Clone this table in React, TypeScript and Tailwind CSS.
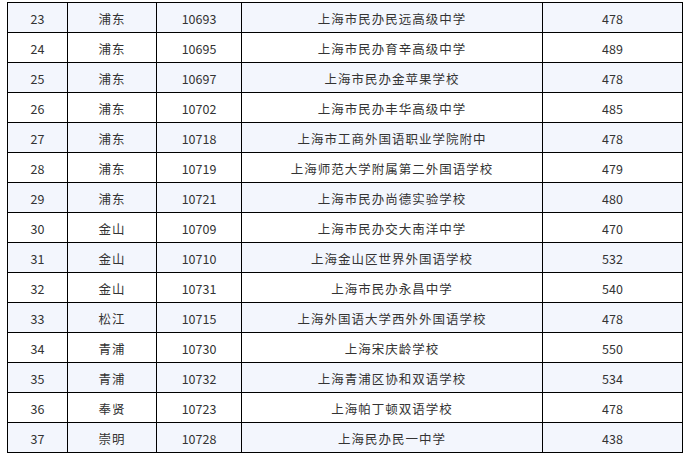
const rows = [
  ["23", "浦东", "10693", "上海市民办民远高级中学", "478"],
  ["24", "浦东", "10695", "上海市民办育辛高级中学", "489"],
  ["25", "浦东", "10697", "上海市民办金苹果学校", "478"],
  ["26", "浦东", "10702", "上海市民办丰华高级中学", "485"],
  ["27", "浦东", "10718", "上海市工商外国语职业学院附中", "478"],
  ["28", "浦东", "10719", "上海师范大学附属第二外国语学校", "479"],
  ["29", "浦东", "10721", "上海市民办尚德实验学校", "480"],
  ["30", "金山", "10709", "上海市民办交大南洋中学", "470"],
  ["31", "金山", "10710", "上海金山区世界外国语学校", "532"],
  ["32", "金山", "10731", "上海市民办永昌中学", "540"],
  ["33", "松江", "10715", "上海外国语大学西外外国语学校", "478"],
  ["34", "青浦", "10730", "上海宋庆龄学校", "550"],
  ["35", "青浦", "10732", "上海青浦区协和双语学校", "534"],
  ["36", "奉贤", "10723", "上海帕丁顿双语学校", "478"],
  ["37", "崇明", "10728", "上海民办民一中学", "438"],
]

const widths = ["w-[60px]", "w-[89px]", "w-[85px]", "w-[301px]", "w-[140px]"]

export default function App() {
  return (
    <div className="h-[457px] w-[689px] overflow-hidden bg-white pl-[7px] pt-[2px] font-['Noto_Sans_CJK_SC',sans-serif] text-[12.5px] text-[#333]">
      <div className="flex w-[676px] flex-col border-l border-t border-black">
        {rows.map((row, i) => (
          <div key={row[0]} className={`flex h-[30px] ${i % 2 === 0 ? "bg-[#f3f6fd]" : "bg-white"}`}>
            {row.map((cell, j) => (
              <div
                key={j}
                className={`${widths[j]} flex items-center justify-center border-b border-r border-black pt-[3px] ${j === 1 || j === 3 ? "tracking-[1px]" : ""}`}
              >
                {cell}
              </div>
            ))}
          </div>
        ))}
      </div>
    </div>
  )
}
